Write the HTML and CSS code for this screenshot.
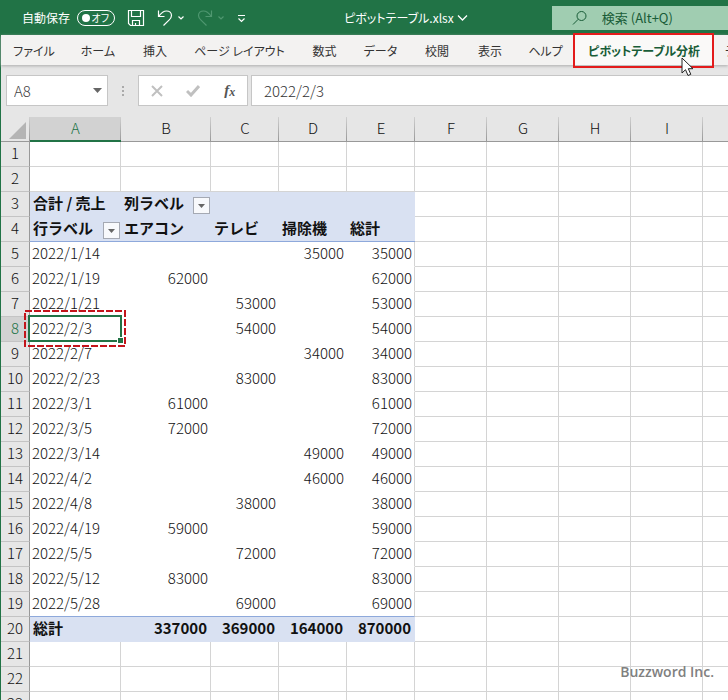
FILE: index.html
```html
<!DOCTYPE html>
<html lang="ja">
<head>
<meta charset="utf-8">
<meta name="viewport" content="width=device-width, initial-scale=1">
<title>ピボットテーブル.xlsx</title>
<link rel="stylesheet" href="styles.css">
</head>
<body>
<header class="titlebar">
  <div class="quick">
    <label class="autosave"><span>自動保存</span>
      <span class="switch"><input type="checkbox" class="switch-input"><span class="knob"></span><span class="switch-text">オフ</span></span>
    </label>
    <button class="tool" aria-label="上書き保存"><svg width="18" height="18" viewBox="0 0 18 18"><path d="M1.5 1.5h15v15h-13l-2-2zM4.500 1.500v6h9v-6M5.500 16.500v-5h7v5M8.500 16.500v-2.500"/></svg></button>
    <button class="tool undo" aria-label="元に戻す"><svg width="28" height="18" viewBox="0 0 28 18"><path d="M1.500 1.500v6h6M2 7C4.500 3.500 7 2 9.500 2c3 0 5 2 5 4.500 0 2-1 3.200-2.500 4.700L6.500 16.500"/><path d="M21.500 7.500l2.500 2.500L26.500 7.500"/></svg></button>
    <button class="tool redo" aria-label="やり直し" disabled><svg width="28" height="18" viewBox="0 0 28 18"><path d="M14.500 1.500v6h-6M14 7C11.500 3.500 9 2 6.500 2c-3 0-5 2-5 4.500 0 2 1 3.200 2.500 4.700L9.500 16.500"/><path d="M21.500 7.500l2.500 2.500L26.500 7.500"/></svg></button>
    <button class="tool" aria-label="クイック アクセス ツール バーのユーザー設定"><svg width="9" height="18" viewBox="0 0 9 18"><path d="M1 6.500h7M1.500 9.500l3 3 3-3"/></svg></button>
  </div>
  <button class="filename">ピボットテーブル.xlsx<svg width="11" height="8" viewBox="0 0 11 8"><path d="M1 1.500l4.500 4.500L10 1.500"/></svg></button>
  <label class="search"><svg width="16" height="16" viewBox="0 0 16 16"><circle cx="9.500" cy="6" r="4.500"/><path d="M6.300 9.200L1 14.500"/></svg><input type="search" aria-label="検索" placeholder="検索 (Alt+Q)"></label>
</header>
<div class="workarea">
  <nav class="tabs" aria-label="リボン">
    <a href="#">ファイル</a><a href="#">ホーム</a><a href="#">挿入</a><a href="#">ページ レイアウト</a><a href="#">数式</a><a href="#">データ</a><a href="#">校閲</a><a href="#">表示</a><a href="#">ヘルプ</a><a href="#" class="active" aria-current="page">ピボットテーブル分析<svg class="cursor" width="14" height="21" viewBox="0 0 14 21"><path d="M1 1v15l3.500-3.300L7 18.500l2.800-1.200-2.500-5.600H12z"/></svg></a><a href="#" class="next">デザイン</a>
  </nav>
  <div class="formulabar">
    <div class="namebox"><input type="text" aria-label="名前ボックス" value="A8"><button aria-label="名前の一覧"><svg width="9" height="5" viewBox="0 0 9 5"><path d="M0 0h9L4.500 5z"/></svg></button></div>
    <span class="grip"><i></i><i></i><i></i></span>
    <div class="actions">
      <button aria-label="キャンセル"><svg width="12" height="12" viewBox="0 0 12 12"><path d="M1 1l10 10M11 1L1 11"/></svg></button>
      <button aria-label="入力"><svg width="14" height="12" viewBox="0 0 14 12"><path class="thick" d="M1 6l4 4 8-9"/></svg></button>
      <button class="fx" aria-label="関数の挿入">f<sub>x</sub></button>
    </div>
    <input class="formula" type="text" aria-label="数式バー" value="2022/2/3">
  </div>
  <main class="sheet">
    <table>
      <colgroup><col class="c-row"><col class="c-a"><col class="c-b"><col class="c-val" span="3"><col class="c-std" span="4"><col></colgroup>
      <thead><tr id="letters"><th class="corner"><svg width="17" height="17" viewBox="0 0 17 17"><path d="M17 0v17H0z"/></svg></th></tr></thead>
      <tbody id="cells"></tbody>
    </table>
  </main>
</div>
<p class="credit">Buzzword Inc.</p>
<script src="app.js"></script>
</body>
</html>
```
FILE: styles.css
```css
* { box-sizing: border-box; }
body {
  margin: 0;
  height: 100vh;
  display: flex;
  flex-direction: column;
  overflow: hidden;
  position: relative;
  background: #fff;
  color: #111;
  font-family: "Noto Sans CJK JP", sans-serif;
  font-size: 15px;
}
button, input { font: inherit; color: inherit; border: 0; background: none; padding: 0; margin: 0; min-width: 0; }
svg { display: block; fill: none; stroke: currentColor; }

.titlebar {
  flex: none;
  height: 35px;
  display: flex;
  align-items: center;
  justify-content: space-between;
  background: #217346;
  color: #fff;
  font-size: 12px;
  font-feature-settings: "palt";
}
.quick { display: flex; align-items: center; gap: 12px; padding-left: 22px; }
.autosave { display: flex; align-items: center; gap: 7px; }
.switch {
  position: relative;
  display: flex;
  align-items: center;
  justify-content: space-between;
  width: 38px;
  height: 16px;
  padding: 0 5px 0 4px;
  border: 1px solid #fff;
  border-radius: 8px;
  font-size: 10px;
}
.switch-input { position: absolute; inset: 0; width: 100%; height: 100%; opacity: 0; }
.knob { width: 8px; height: 8px; border-radius: 50%; background: #fff; }
.tool svg { stroke-width: 1.2; }
.redo { color: #4f9770; }
.filename { display: flex; align-items: center; gap: 3px; margin-left: 14px; font-size: 12px; }
.filename svg { stroke-width: 1.3; }
.search {
  width: 24.2%;
  height: 24px;
  display: flex;
  align-items: center;
  gap: 14px;
  padding-left: 20px;
  background: #a0cdb1;
  color: #185c37;
}
.search svg { flex: none; }
.search input { width: 100%; font-size: 13px; outline: 0; }
.search input::placeholder { color: #185c37; opacity: 1; }

.workarea {
  flex: 1;
  min-height: 0;
  display: flex;
  flex-direction: column;
  border-left: 1px solid #217346;
  background: #e6e6e6;
}
.tabs {
  flex: none;
  display: grid;
  grid-template-columns: 66px 62px 52px 117px 53px 59px 54px 52px 59px 138px 1fr;
  height: 30px;
  background: #f3f2f1;
  box-shadow: 0 1px 3px #aaa;
  font-size: 12px;
  font-feature-settings: "palt";
}
.tabs a {
  display: flex;
  align-items: center;
  justify-content: center;
  min-width: 0;
  color: #333;
  text-decoration: none;
  white-space: nowrap;
}
.tabs .active { position: relative; background: #faf9f8; color: #185c37; font-weight: 700; }
.tabs .active::after { content: ""; position: absolute; inset: -2px -1px -3px -2px; border: 2px solid #e31b1b; }
.tabs .next { justify-content: flex-start; padding-left: 12px; overflow: hidden; }
.cursor { position: absolute; right: 18px; top: 22px; z-index: 2; fill: #fff; stroke: #222; }

.formulabar { flex: none; display: flex; height: 31px; margin: 10px 0 11px 5px; }
.namebox, .actions, .formula { border: 1px solid #c6c6c6; background: #fff; }
.namebox { width: 102px; display: flex; align-items: center; padding: 0 5px 0 7px; color: #444; }
.namebox input { flex: 1; font-weight: 300; }
.namebox svg { fill: #666; stroke: none; }
.grip { width: 30px; display: flex; flex-direction: column; align-items: center; justify-content: center; gap: 2px; }
.grip i { width: 2px; height: 2px; background: #aaa; }
.actions { width: 110px; display: flex; align-items: center; justify-content: space-around; color: #c0c0c0; }
.actions svg { stroke-width: 2; }
.actions .thick { stroke-width: 3; }
.fx { color: #555; font-family: "Liberation Serif", serif; font-style: italic; font-weight: 700; font-size: 15px; line-height: 20px; }
.fx sub { font-size: 12px; vertical-align: -1px; }
.formula { flex: 1; margin-left: 3px; padding: 0 0 1px 12px; border-right: 0; color: #333; font-weight: 300; }

.sheet { flex: 1; min-height: 0; overflow: hidden; }
table { table-layout: fixed; width: 100%; border-collapse: separate; border-spacing: 0; }
.c-row { width: 29px; }
.c-a { width: 91px; }
.c-b { width: 90px; }
.c-val { width: 68px; }
.c-std { width: 72px; }
th, td { height: 25px; padding: 0 2px 2px; line-height: 22px; white-space: nowrap; font-weight: 300; }
thead th {
  background: linear-gradient(#d0d0d0, #999) right / 1px 100% no-repeat #e6e6e6;
  border-bottom: 1px solid #999;
  text-align: center;
}
thead th:last-child { background-image: none; }
thead .corner { padding: 0 3px 2px 8px; vertical-align: bottom; }
.corner svg { fill: #b4b4b4; stroke: none; }
thead .current { background-color: #d2d2d2; color: #217346; border-color: #217346; box-shadow: inset 0 -1px #217346; }
tbody th { background: #e6e6e6; border-right: 1px solid #999; border-bottom: 1px solid #c4c4c4; padding: 0 0 2px; }
tbody .current { background: #d2d2d2; color: #217346; }
td { background: #fff; border-right: 1px solid #d4d4d4; border-bottom: 1px solid #d4d4d4; }
td:last-child { border-right: 0; }
.body { border-color: #fff; border-right: 0; padding-right: 3px; text-align: right; }
.date { text-align: left; }
.last { border-right: 1px solid #d4d4d4; padding-right: 2px; }
.head, .total { background: #d9e1f2; border-color: #d9e1f2; border-right: 0; font-weight: 700; }
.head { padding-left: 3px; padding-right: 1px; }
.line { border-bottom-color: #8ea9db; }
.total { text-align: right; padding-right: 4px; }
.total.date { text-align: left; padding-left: 3px; }
.with-filter { display: flex; align-items: center; justify-content: space-between; height: 22px; }
.filter {
  flex: none;
  align-self: flex-end;
  width: 17px;
  height: 17px;
  display: grid;
  place-items: center;
  border: 1px solid #a5a9b3;
  background: #f8f9fc;
}
.filter svg { fill: #666; stroke: none; }
.selected { position: relative; }
.frame { position: absolute; inset: -2px -1px -1px -2px; border: 2px solid #217346; }
.frame::after { content: ""; position: absolute; right: -3px; bottom: -3px; width: 5px; height: 5px; background: #217346; outline: 1px solid #fff; }
.marquee { position: absolute; left: -6px; top: -7px; z-index: 1; stroke: #c3151b; stroke-width: 2; }
.credit { position: absolute; right: 14px; bottom: 16px; margin: 0; color: #808080; font: 600 14px/24px "Open Sans", sans-serif; }
```
FILE: app.js
```js
const rows = [
  ["2022/1/14", "", "", 35000, 35000],
  ["2022/1/19", 62000, "", "", 62000],
  ["2022/1/21", "", 53000, "", 53000],
  ["2022/2/3", "", 54000, "", 54000],
  ["2022/2/7", "", "", 34000, 34000],
  ["2022/2/23", "", 83000, "", 83000],
  ["2022/3/1", 61000, "", "", 61000],
  ["2022/3/5", 72000, "", "", 72000],
  ["2022/3/14", "", "", 49000, 49000],
  ["2022/4/2", "", "", 46000, 46000],
  ["2022/4/8", "", 38000, "", 38000],
  ["2022/4/19", 59000, "", "", 59000],
  ["2022/5/5", "", 72000, "", 72000],
  ["2022/5/12", 83000, "", "", 83000],
  ["2022/5/28", "", 69000, "", 69000]
];
const filter = (text) => `<div class="with-filter"><span>${text}</span><button class="filter" aria-label="${text}のフィルター"><svg width="7" height="4" viewBox="0 0 7 4"><path d="M0 0h7L3.500 4z"/></svg></button></div>`;
const selection = '<span class="frame"></span><svg class="marquee" width="102" height="37"><rect x="1" y="1" width="100" height="35" stroke-dasharray="7 2"/></svg>';

// Sheet rows are numbered from 1; the pivot table covers A3:E20.
const sheet = {
  3: ["合計 / 売上", filter("列ラベル"), "", "", ""],
  4: [filter("行ラベル"), "エアコン", "テレビ", "掃除機", "総計"],
  20: ["総計", 337000, 369000, 164000, 870000]
};
rows.forEach((row, i) => { sheet[i + 5] = row; });

// The strip after column I is the unlabelled remainder of the window.
document.getElementById("letters").insertAdjacentHTML("beforeend",
  [..."ABCDEFGHI", ""].map((c) => `<th scope="col"${c === "A" ? ' class="current"' : ""}>${c}</th>`).join(""));

let html = "";
for (let r = 1; r <= 23; r++) {
  html += `<tr><th scope="row"${r === 8 ? ' class="current"' : ""}>${r}</th>`;
  for (let c = 0; c < 10; c++) {
    const names = [];
    if (sheet[r] && c < 5) {
      names.push(r < 5 ? "head" : r === 20 ? "total" : "body");
      if (c === 0) names.push("date");
      if (c === 4 && r > 4 && r < 20) names.push("last");
      if (r === 4 || r === 19) names.push("line");
      if (r === 8 && c === 0) names.push("selected");
    }
    const value = sheet[r] && c < 5 ? sheet[r][c] : "";
    html += `<td class="${names.join(" ")}">${value}${r === 8 && c === 0 ? selection : ""}</td>`;
  }
  html += "</tr>";
}
document.getElementById("cells").innerHTML = html;
```
